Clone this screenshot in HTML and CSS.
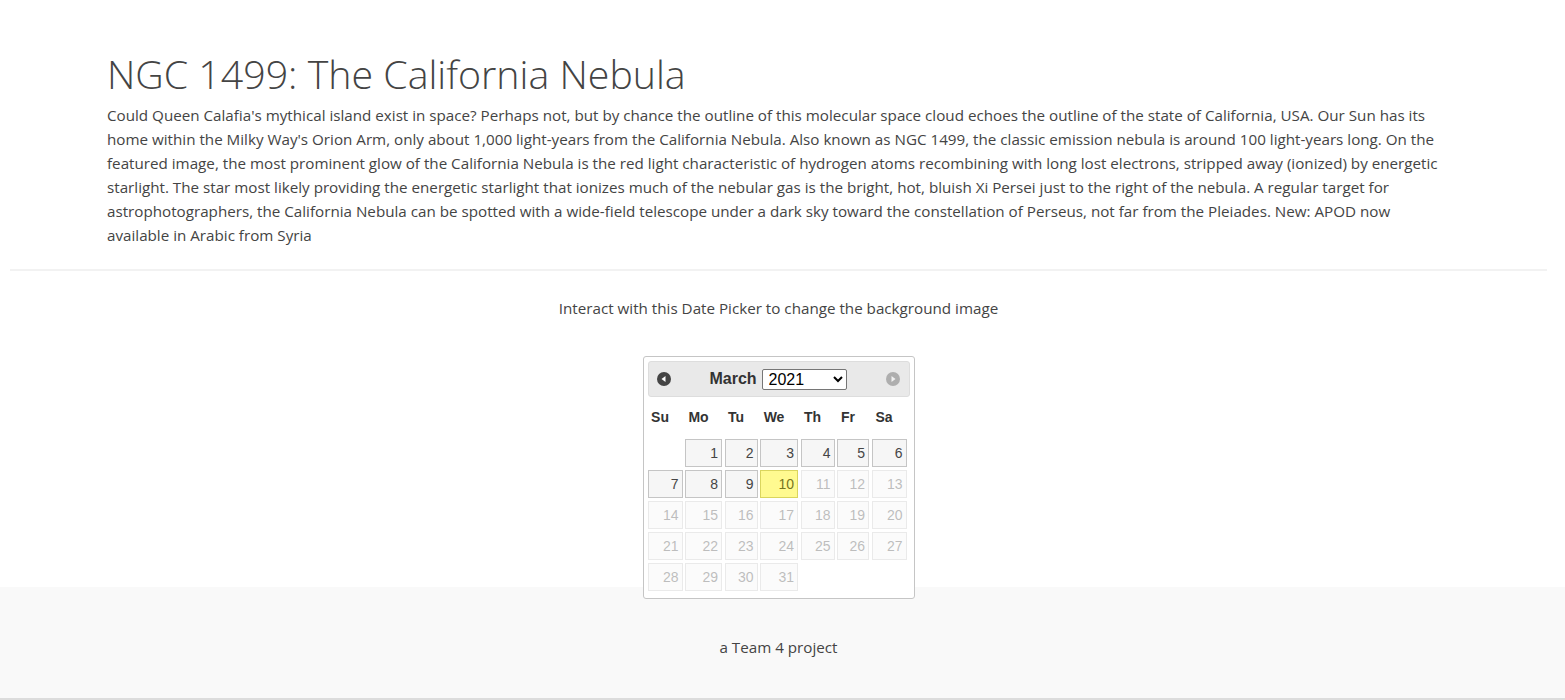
FILE: index.html
```html
<!DOCTYPE html>
<html lang="en">
<head>
<meta charset="utf-8">
<title>NGC 1499: The California Nebula</title>
<link rel="stylesheet" href="styles.css">
</head>
<body>
<main class="page">
  <section class="apod">
    <h1 class="apod-title">NGC 1499: The California Nebula</h1>
    <p class="apod-text">Could Queen Calafia's mythical island exist in space? Perhaps not, but by chance the outline of this molecular space cloud echoes the outline of the state of California, USA. Our Sun has its home within the Milky Way's Orion Arm, only about 1,000 light-years from the California Nebula. Also known as NGC 1499, the classic emission nebula is around 100 light-years long. On the featured image, the most prominent glow of the California Nebula is the red light characteristic of hydrogen atoms recombining with long lost electrons, stripped away (ionized) by energetic starlight. The star most likely providing the energetic starlight that ionizes much of the nebular gas is the bright, hot, bluish Xi Persei just to the right of the nebula. A regular target for astrophotographers, the California Nebula can be spotted with a wide-field telescope under a dark sky toward the constellation of Perseus, not far from the Pleiades. New: APOD now available in Arabic from Syria</p>
  </section>
  <hr class="divider">
  <section class="picker-section">
    <p class="hint">Interact with this Date Picker to change the background image</p>
    <div class="datepicker">
      <div class="dp-header">
        <span class="dp-nav dp-prev" title="Prev">
          <svg width="14" height="14" viewBox="0 0 14 14"><circle cx="7" cy="7" r="7" fill="#444"/><path d="M4.5 7 L8.5 4 L8.5 10 Z" fill="#fff"/></svg>
        </span>
        <div class="dp-title">
          <span class="dp-month">March</span>
          <select class="dp-year"><option>2021</option></select>
        </div>
        <span class="dp-nav dp-next" title="Next">
          <svg width="14" height="14" viewBox="0 0 14 14"><circle cx="7" cy="7" r="7" fill="#444"/><path d="M9.5 7 L5.5 4 L5.5 10 Z" fill="#fff"/></svg>
        </span>
      </div>
      <div class="dp-grid">
        <span class="dp-dow">Su</span><span class="dp-dow">Mo</span><span class="dp-dow">Tu</span><span class="dp-dow">We</span><span class="dp-dow">Th</span><span class="dp-dow">Fr</span><span class="dp-dow">Sa</span>
        <span class="dp-empty"></span><a class="dp-day">1</a><a class="dp-day">2</a><a class="dp-day">3</a><a class="dp-day">4</a><a class="dp-day">5</a><a class="dp-day">6</a>
        <a class="dp-day">7</a><a class="dp-day">8</a><a class="dp-day">9</a><a class="dp-day dp-today">10</a><span class="dp-day dp-off">11</span><span class="dp-day dp-off">12</span><span class="dp-day dp-off">13</span>
        <span class="dp-day dp-off">14</span><span class="dp-day dp-off">15</span><span class="dp-day dp-off">16</span><span class="dp-day dp-off">17</span><span class="dp-day dp-off">18</span><span class="dp-day dp-off">19</span><span class="dp-day dp-off">20</span>
        <span class="dp-day dp-off">21</span><span class="dp-day dp-off">22</span><span class="dp-day dp-off">23</span><span class="dp-day dp-off">24</span><span class="dp-day dp-off">25</span><span class="dp-day dp-off">26</span><span class="dp-day dp-off">27</span>
        <span class="dp-day dp-off">28</span><span class="dp-day dp-off">29</span><span class="dp-day dp-off">30</span><span class="dp-day dp-off">31</span>
      </div>
    </div>
  </section>
</main>
<footer class="footer">a Team 4 project</footer>
</body>
</html>
```
FILE: styles.css
```css
* { box-sizing: border-box; }
html, body { margin: 0; padding: 0; }
body {
  font-family: "Open Sans", "Noto Sans", sans-serif;
  font-size: 16px;
  line-height: 24px;
  color: #444;
  background: #fff;
}
.page {
  padding-right: 8px;
}
.apod {
  padding: 50px 107px 0;
}
.apod-title {
  margin: 0 0 5px;
  font-size: 39.3px;
  line-height: 48px;
  font-weight: 300;
  color: #444;
}
.apod-text {
  margin: 0;
  font-size: 15.2px;
}
.divider {
  margin: 22px 10px 0 10px;
  border: 0;
  border-top: 2px solid #f2f2f2;
  height: 0;
}
.picker-section {
  display: flex;
  flex-direction: column;
  align-items: center;
  padding-top: 25px;
}
.hint {
  margin: 0 0 36px;
  font-size: 15.2px;
}
.datepicker {
  position: relative;
  z-index: 1;
  margin-bottom: -12px;
  width: 272px;
  padding: 4px 4px 7px;
  background: #fff;
  border: 1px solid #c5c5c5;
  border-radius: 3px;
  font-family: "Liberation Sans", Arial, sans-serif;
  color: #333;
}
.dp-header {
  display: flex;
  align-items: center;
  justify-content: space-between;
  height: 36px;
  padding: 0 9px 0 8px;
  background: #e9e9e9;
  border: 1px solid #dddddd;
  border-radius: 3px;
}
.dp-nav { display: flex; width: 14px; height: 14px; }
.dp-next { opacity: 0.35; }
.dp-title {
  display: flex;
  align-items: center;
  gap: 5px;
}
.dp-month {
  font-weight: bold;
  font-size: 16px;
  color: #333;
}
.dp-year {
  width: 85px;
  height: 21px;
  font-family: "Liberation Sans", Arial, sans-serif;
  font-size: 16px;
  padding: 0 0 0 2px;
  border: 1px solid #767676;
  border-radius: 2px;
  background: #fff;
  color: #000;
}
.dp-grid {
  display: grid;
  grid-template-columns: 35px 37px 33px 38px 34px 32px 35px;
  grid-template-rows: 39px;
  grid-auto-rows: 28px;
  column-gap: 2.5px;
  row-gap: 3px;
}
.dp-dow {
  grid-row: 1;
  display: flex;
  align-items: center;
  justify-content: center;
  padding-right: 10px;
  font-weight: bold;
  font-size: 14px;
  color: #333;
}
.dp-day {
  display: flex;
  align-items: center;
  justify-content: flex-end;
  padding-right: 3px;
  font-size: 14px;
  background: #f6f6f6;
  border: 1px solid #c5c5c5;
  color: #454545;
  text-decoration: none;
}
.dp-today {
  background: #fffa90;
  border-color: #dad55e;
  color: #777620;
}
.dp-off { opacity: 0.35; }
.footer {
  height: 113px;
  padding: 48px 8px 0 0;
  text-align: center;
  font-size: 15.2px;
  background: #f9f9f9;
  border-bottom: 2px solid #dcdcdc;
}
```
